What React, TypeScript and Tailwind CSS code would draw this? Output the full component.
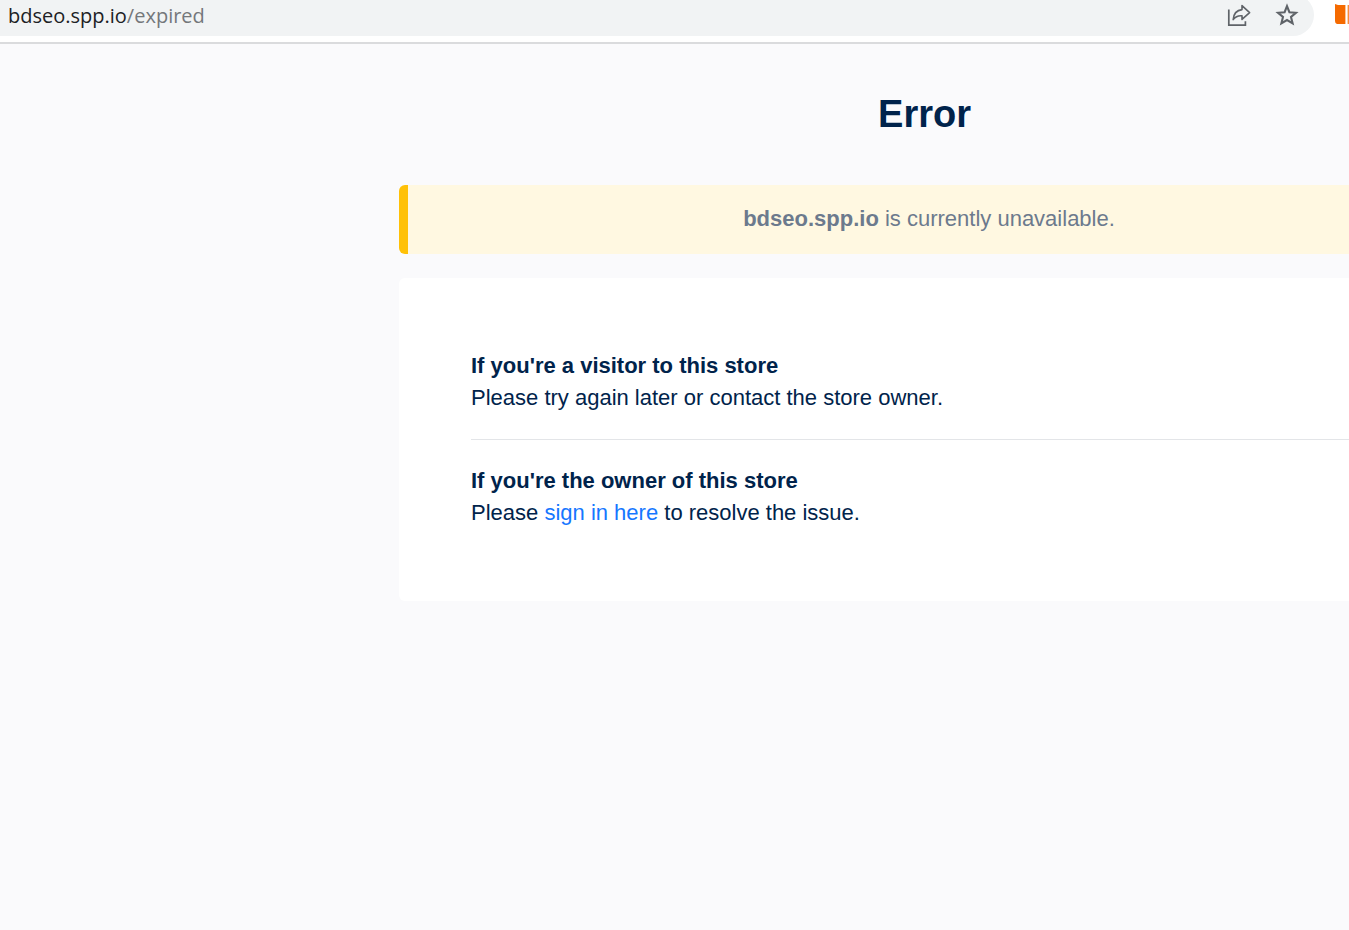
const ShareIcon = () => (
  <svg width="24" height="24" viewBox="0 0 24 24" fill="none" stroke="currentColor">
    <path d="M1.8 6.5V22.2H18.4V18.2" strokeWidth="1.7" />
    <path
      d="M15 2.6L22.6 9.6L15 16.4V12.8C11.2 12.4 8.6 13.4 6.2 16.6C6.6 11.2 9.4 7.2 15 6.6V2.6Z"
      strokeWidth="1.6"
      strokeLinejoin="round"
    />
  </svg>
);

const StarIcon = () => (
  <svg width="24" height="24" viewBox="0 0 24 24" fill="none" stroke="currentColor">
    <path
      d="M12 3.2L14.4 9.2L21 9.8L16 14L17.6 20.4L12 17L6.4 20.4L8 14L3 9.8L9.6 9.2Z"
      strokeWidth="2.1"
    />
  </svg>
);

const ExtensionIcon = () => (
  <svg width="14" height="22" viewBox="0 0 14 22">
    <path d="M0 0L3 1H10.4V20H2Q0 19.6 0 17Z" fill="#f56a00" />
    <path d="M12.6 1H14V20H12.6Z" fill="#f98b3a" />
  </svg>
);

const AddressBar = () => (
  <header className="flex h-11 items-start justify-between overflow-hidden border-b-2 border-[#dadbdd] bg-white">
    <div className="-mt-1.5 flex h-[42px] min-w-0 flex-1 items-center justify-between rounded-r-full bg-[#f1f3f4] pr-[15px] pl-2">
      <p className="pt-0.5 font-['Open_Sans',sans-serif] text-[20px] leading-7 text-[#202124]">
        bdseo.spp.io<span className="text-[#74777b]">/expired</span>
      </p>
      <div className="flex items-center gap-6 text-[#5f6368]">
        <button type="button" aria-label="Share this page">
          <ShareIcon />
        </button>
        <button type="button" aria-label="Bookmark this page">
          <StarIcon />
        </button>
      </div>
    </div>
    <button type="button" aria-label="Extension" className="mt-1 ml-[21px]">
      <ExtensionIcon />
    </button>
  </header>
);

const App = () => {
  return (
    <div className="min-h-screen overflow-hidden bg-[#fafafc] font-['Liberation_Sans',Arial,sans-serif] text-[22px] leading-8 text-[#00234b]">
      <AddressBar />

      <main className="ml-[399px] w-[1051px]">
        <h1 className="py-12 text-center text-[38px] leading-[45px] font-bold">
          Error
        </h1>

        <div className="rounded-md border-l-9 border-[#ffc107] bg-[#fff8e1] pt-[18px] pb-[19px] text-center text-[#6c7a8d]">
          <strong>bdseo.spp.io</strong> is currently unavailable.
        </div>

        <div className="mt-6 rounded-md bg-white p-[72px]">
          <section>
            <h2 className="font-bold">If you're a visitor to this store</h2>
            <p>Please try again later or contact the store owner.</p>
          </section>
          <hr className="my-[25px] border-[#e3e5e8]" />
          <section>
            <h2 className="font-bold">If you're the owner of this store</h2>
            <p>
              Please{" "}
              <a href="#signin" className="text-[#1677ff]">
                sign in here
              </a>{" "}
              to resolve the issue.
            </p>
          </section>
        </div>
      </main>
    </div>
  );
};

export default App;
